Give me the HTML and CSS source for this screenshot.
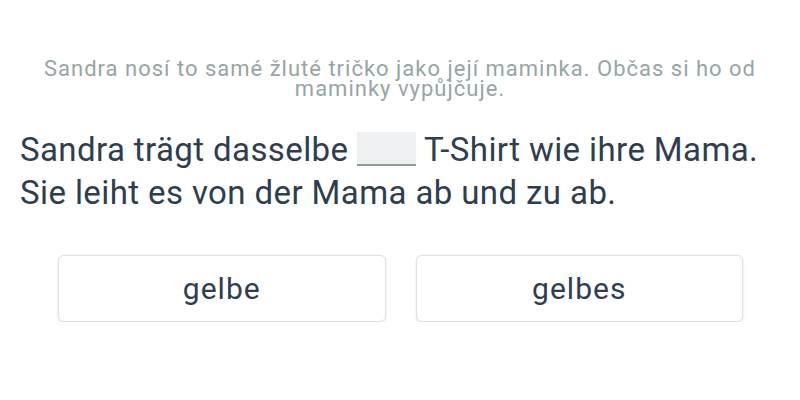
FILE: index.html
```html
<!DOCTYPE html>
<html lang="cs">
<head>
    <meta charset="UTF-8">
    <meta name="viewport" content="width=device-width, initial-scale=1.0">
    <title>Cvičení</title>
    <link rel="stylesheet" href="styles.css">
</head>
<body>
    <div class="exercise">
        <p class="translation">Sandra nosí to samé žluté tričko jako její maminka. Občas si ho od maminky vypůjčuje.</p>
        <p class="sentence">Sandra trägt dasselbe <span class="blank"></span> T-Shirt wie ihre Mama.<br>Sie leiht es von der Mama ab und zu ab.</p>
        <div class="choices">
            <button class="choice">gelbe</button>
            <button class="choice">gelbes</button>
        </div>
    </div>
</body>
</html>
```

FILE: styles.css
```css
body {
    font-family: Roboto, "Noto Sans", sans-serif;
    background-color: #ffffff;
    margin: 0;
    padding: 0;
}

.exercise {
    padding: 59px 20px 0 20px;
}

.translation {
    margin: 0 18px;
    font-size: 22px;
    line-height: 20px;
    letter-spacing: 1px;
    color: #95a5a6;
    text-align: center;
}

.sentence {
    margin: 29px 0 0 0;
    font-size: 33px;
    line-height: 43px;
    letter-spacing: 0.4px;
    color: #2c3e50;
}

.blank {
    display: inline-block;
    width: 59px;
    height: 32px;
    vertical-align: -5px;
    background-color: #eef0f2;
    border-bottom: 2px solid #8a9ea0;
}

.choices {
    display: flex;
    gap: 30px;
    margin: 41px 37px 0 38px;
}

.choice {
    flex: 1;
    height: 67px;
    font-family: Roboto, "Noto Sans", sans-serif;
    font-size: 30px;
    letter-spacing: 1px;
    color: #2c3e50;
    background-color: #ffffff;
    border: 1px solid #e0e0e0;
    border-radius: 6px;
    box-shadow: 0 1px 3px rgba(0, 0, 0, 0.1);
    cursor: pointer;
}
```
